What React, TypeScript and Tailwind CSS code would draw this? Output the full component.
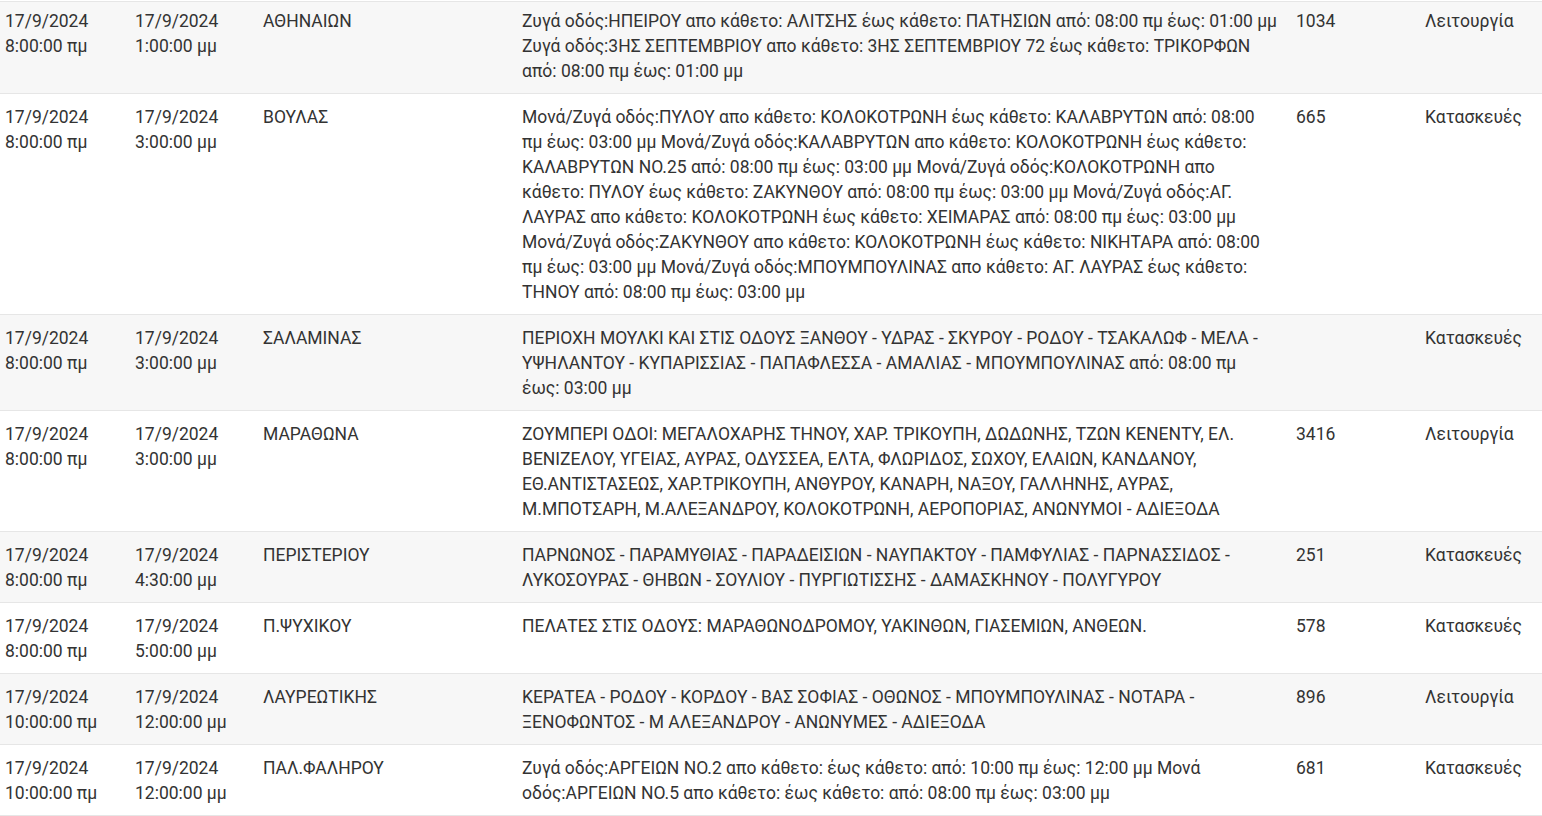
type Outage = {
  from: [string, string];
  to: [string, string];
  area: string;
  streets: string;
  customers: string;
  reason: string;
};

const rows: Outage[] = [
  {
    from: ['17/9/2024', '8:00:00 πμ'],
    to: ['17/9/2024', '1:00:00 μμ'],
    area: 'ΑΘΗΝΑΙΩΝ',
    streets:
      'Ζυγά οδός:ΗΠΕΙΡΟΥ απο κάθετο: ΑΛΙΤΣΗΣ έως κάθετο: ΠΑΤΗΣΙΩΝ από: 08:00 πμ έως: 01:00 μμ Ζυγά οδός:3ΗΣ ΣΕΠΤΕΜΒΡΙΟΥ απο κάθετο: 3ΗΣ ΣΕΠΤΕΜΒΡΙΟΥ 72 έως κάθετο: ΤΡΙΚΟΡΦΩΝ από: 08:00 πμ έως: 01:00 μμ',
    customers: '1034',
    reason: 'Λειτουργία',
  },
  {
    from: ['17/9/2024', '8:00:00 πμ'],
    to: ['17/9/2024', '3:00:00 μμ'],
    area: 'ΒΟΥΛΑΣ',
    streets:
      'Μονά/Ζυγά οδός:ΠΥΛΟΥ απο κάθετο: ΚΟΛΟΚΟΤΡΩΝΗ έως κάθετο: ΚΑΛΑΒΡΥΤΩΝ από: 08:00 πμ έως: 03:00 μμ Μονά/Ζυγά οδός:ΚΑΛΑΒΡΥΤΩΝ απο κάθετο: ΚΟΛΟΚΟΤΡΩΝΗ έως κάθετο: ΚΑΛΑΒΡΥΤΩΝ ΝΟ.25 από: 08:00 πμ έως: 03:00 μμ Μονά/Ζυγά οδός:ΚΟΛΟΚΟΤΡΩΝΗ απο κάθετο: ΠΥΛΟΥ έως κάθετο: ΖΑΚΥΝΘΟΥ από: 08:00 πμ έως: 03:00 μμ Μονά/Ζυγά οδός:ΑΓ. ΛΑΥΡΑΣ απο κάθετο: ΚΟΛΟΚΟΤΡΩΝΗ έως κάθετο: ΧΕΙΜΑΡΑΣ από: 08:00 πμ έως: 03:00 μμ Μονά/Ζυγά οδός:ΖΑΚΥΝΘΟΥ απο κάθετο: ΚΟΛΟΚΟΤΡΩΝΗ έως κάθετο: ΝΙΚΗΤΑΡΑ από: 08:00 πμ έως: 03:00 μμ Μονά/Ζυγά οδός:ΜΠΟΥΜΠΟΥΛΙΝΑΣ απο κάθετο: ΑΓ. ΛΑΥΡΑΣ έως κάθετο: ΤΗΝΟΥ από: 08:00 πμ έως: 03:00 μμ',
    customers: '665',
    reason: 'Κατασκευές',
  },
  {
    from: ['17/9/2024', '8:00:00 πμ'],
    to: ['17/9/2024', '3:00:00 μμ'],
    area: 'ΣΑΛΑΜΙΝΑΣ',
    streets:
      'ΠΕΡΙΟΧΗ ΜΟΥΛΚΙ ΚΑΙ ΣΤΙΣ ΟΔΟΥΣ ΞΑΝΘΟΥ - ΥΔΡΑΣ - ΣΚΥΡΟΥ - ΡΟΔΟΥ - ΤΣΑΚΑΛΩΦ - ΜΕΛΑ - ΥΨΗΛΑΝΤΟΥ - ΚΥΠΑΡΙΣΣΙΑΣ - ΠΑΠΑΦΛΕΣΣΑ - ΑΜΑΛΙΑΣ - ΜΠΟΥΜΠΟΥΛΙΝΑΣ από: 08:00 πμ έως: 03:00 μμ',
    customers: '',
    reason: 'Κατασκευές',
  },
  {
    from: ['17/9/2024', '8:00:00 πμ'],
    to: ['17/9/2024', '3:00:00 μμ'],
    area: 'ΜΑΡΑΘΩΝΑ',
    streets:
      'ΖΟΥΜΠΕΡΙ ΟΔΟΙ: ΜΕΓΑΛΟΧΑΡΗΣ ΤΗΝΟΥ, ΧΑΡ. ΤΡΙΚΟΥΠΗ, ΔΩΔΩΝΗΣ, ΤΖΩΝ ΚΕΝΕΝΤΥ, ΕΛ. ΒΕΝΙΖΕΛΟΥ, ΥΓΕΙΑΣ, ΑΥΡΑΣ, ΟΔΥΣΣΕΑ, ΕΛΤΑ, ΦΛΩΡΙΔΟΣ, ΣΩΧΟΥ, ΕΛΑΙΩΝ, ΚΑΝΔΑΝΟΥ, ΕΘ.ΑΝΤΙΣΤΑΣΕΩΣ, ΧΑΡ.ΤΡΙΚΟΥΠΗ, ΑΝΘΥΡΟΥ, ΚΑΝΑΡΗ, ΝΑΞΟΥ, ΓΑΛΛΗΝΗΣ, ΑΥΡΑΣ, Μ.ΜΠΟΤΣΑΡΗ, Μ.ΑΛΕΞΑΝΔΡΟΥ, ΚΟΛΟΚΟΤΡΩΝΗ, ΑΕΡΟΠΟΡΙΑΣ, ΑΝΩΝΥΜΟΙ - ΑΔΙΕΞΟΔΑ',
    customers: '3416',
    reason: 'Λειτουργία',
  },
  {
    from: ['17/9/2024', '8:00:00 πμ'],
    to: ['17/9/2024', '4:30:00 μμ'],
    area: 'ΠΕΡΙΣΤΕΡΙΟΥ',
    streets:
      'ΠΑΡΝΩΝΟΣ - ΠΑΡΑΜΥΘΙΑΣ - ΠΑΡΑΔΕΙΣΙΩΝ - ΝΑΥΠΑΚΤΟΥ - ΠΑΜΦΥΛΙΑΣ - ΠΑΡΝΑΣΣΙΔΟΣ - ΛΥΚΟΣΟΥΡΑΣ - ΘΗΒΩΝ - ΣΟΥΛΙΟΥ - ΠΥΡΓΙΩΤΙΣΣΗΣ - ΔΑΜΑΣΚΗΝΟΥ - ΠΟΛΥΓΥΡΟΥ',
    customers: '251',
    reason: 'Κατασκευές',
  },
  {
    from: ['17/9/2024', '8:00:00 πμ'],
    to: ['17/9/2024', '5:00:00 μμ'],
    area: 'Π.ΨΥΧΙΚΟΥ',
    streets: 'ΠΕΛΑΤΕΣ ΣΤΙΣ ΟΔΟΥΣ: ΜΑΡΑΘΩΝΟΔΡΟΜΟΥ, ΥΑΚΙΝΘΩΝ, ΓΙΑΣΕΜΙΩΝ, ΑΝΘΕΩΝ.',
    customers: '578',
    reason: 'Κατασκευές',
  },
  {
    from: ['17/9/2024', '10:00:00 πμ'],
    to: ['17/9/2024', '12:00:00 μμ'],
    area: 'ΛΑΥΡΕΩΤΙΚΗΣ',
    streets:
      'ΚΕΡΑΤΕΑ - ΡΟΔΟΥ - ΚΟΡΔΟΥ - ΒΑΣ ΣΟΦΙΑΣ - ΟΘΩΝΟΣ - ΜΠΟΥΜΠΟΥΛΙΝΑΣ - ΝΟΤΑΡΑ - ΞΕΝΟΦΩΝΤΟΣ - Μ ΑΛΕΞΑΝΔΡΟΥ - ΑΝΩΝΥΜΕΣ - ΑΔΙΕΞΟΔΑ',
    customers: '896',
    reason: 'Λειτουργία',
  },
  {
    from: ['17/9/2024', '10:00:00 πμ'],
    to: ['17/9/2024', '12:00:00 μμ'],
    area: 'ΠΑΛ.ΦΑΛΗΡΟΥ',
    streets:
      'Ζυγά οδός:ΑΡΓΕΙΩΝ ΝΟ.2 απο κάθετο: έως κάθετο: από: 10:00 πμ έως: 12:00 μμ Μονά οδός:ΑΡΓΕΙΩΝ ΝΟ.5 απο κάθετο: έως κάθετο: από: 08:00 πμ έως: 03:00 μμ',
    customers: '681',
    reason: 'Κατασκευές',
  },
];

export default function App() {
  return (
    <div
      className="min-h-screen bg-white pt-px text-[17.5px] leading-[25px] text-[#333333]"
      style={{ fontFamily: 'Roboto, "Noto Sans", sans-serif' }}
    >
      {rows.map((r, i) => (
        <div
          key={i}
          className={`grid grid-cols-[130px_128px_259px_774px_129px_1fr] border-b border-[#e6e6e6] ${
            i === 0 ? 'border-t' : ''
          } ${i % 2 === 0 ? 'bg-[#f7f7f7]' : 'bg-white'}`}
        >
          {[
            <>
              {r.from[0]}
              <br />
              {r.from[1]}
            </>,
            <>
              {r.to[0]}
              <br />
              {r.to[1]}
            </>,
            r.area,
            r.streets,
            r.customers,
            r.reason,
          ].map((cell, j) => (
            <div
              key={j}
              className={`pl-[5px] pb-[9px] ${j === 3 ? 'pr-[14px]' : 'pr-[5px]'} ${
                i === 0 ? 'pt-[7px]' : 'pt-[11px]'
              }`}
            >
              {cell}
            </div>
          ))}
        </div>
      ))}
    </div>
  );
}
